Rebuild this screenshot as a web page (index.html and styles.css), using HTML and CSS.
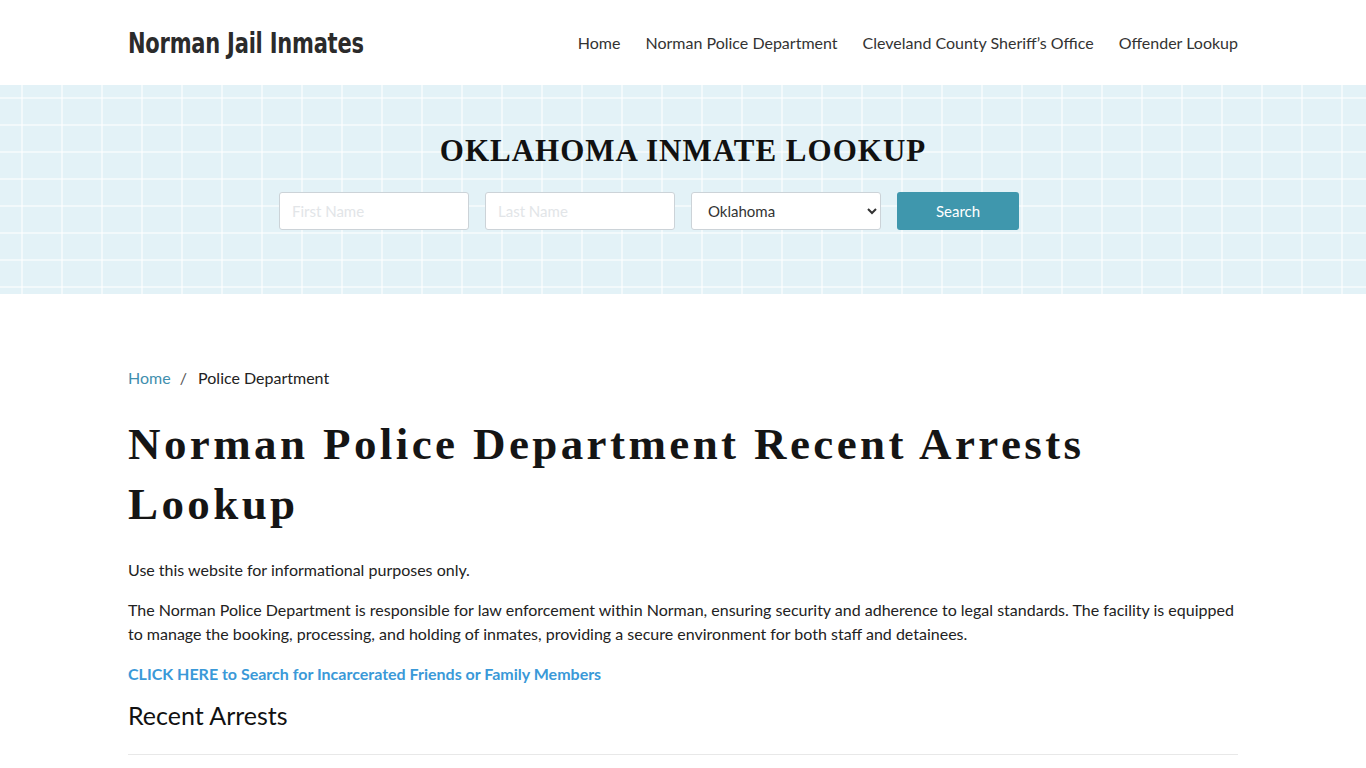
FILE: index.html
```html
<!DOCTYPE html>
<html lang="en">
<head>
    <meta charset="UTF-8">
    <meta name="viewport" content="width=device-width, initial-scale=1.0">
    <title>Norman Police Department Recent Arrests Lookup</title>
    <link rel="stylesheet" href="styles.css">
</head>
<body>
    <header class="site-header">
        <div class="container header-row">
            <a class="logo" href="#">Norman Jail Inmates</a>
            <nav class="main-nav">
                <a href="#">Home</a>
                <a href="#">Norman Police Department</a>
                <a href="#">Cleveland County Sheriff’s Office</a>
                <a href="#">Offender Lookup</a>
            </nav>
        </div>
    </header>

    <section class="search-banner">
        <h2>Oklahoma Inmate Lookup</h2>
        <form class="search-form" onsubmit="return false;">
            <input type="text" placeholder="First Name">
            <input type="text" placeholder="Last Name">
            <select>
                <option>Oklahoma</option>
            </select>
            <button type="submit">Search</button>
        </form>
    </section>

    <main class="container content">
        <div class="breadcrumb">
            <a href="#">Home</a>
            <span class="sep">/</span>
            <span>Police Department</span>
        </div>

        <h1>Norman Police Department Recent Arrests Lookup</h1>

        <p>Use this website for informational purposes only.</p>
        <p>The Norman Police Department is responsible for law enforcement within Norman, ensuring security and adherence to legal standards. The facility is equipped to manage the booking, processing, and holding of inmates, providing a secure environment for both staff and detainees.</p>
        <p><a class="cta" href="#">CLICK HERE to Search for Incarcerated Friends or Family Members</a></p>

        <h3>Recent Arrests</h3>
        <hr>
    </main>
</body>
</html>
```

FILE: styles.css
```css
body {
    margin: 0;
    font-family: Lato, "Open Sans", sans-serif;
    font-size: 16px;
    color: #222;
    background: #fff;
}

a {
    text-decoration: none;
}

.container {
    width: 1110px;
    margin: 0 auto;
}

/* header */
.site-header {
    height: 85px;
}

.header-row {
    display: flex;
    justify-content: space-between;
    align-items: center;
    height: 85px;
}

/* no condensed face installed, so squeeze the bold sans */
.logo {
    display: inline-block;
    font-family: "DejaVu Sans", sans-serif;
    font-weight: bold;
    font-size: 28px;
    letter-spacing: -0.3px;
    color: #2b2b2b;
    margin-top: 2px;
    transform: scaleX(0.75);
    transform-origin: left center;
    width: 234px;
    white-space: nowrap;
}

.main-nav {
    display: flex;
    gap: 25px;
}

.main-nav a {
    color: #333;
    font-size: 16px;
}

/* search banner */
.search-banner {
    height: 209px;
    box-sizing: border-box;
    padding-top: 48px;
    background-color: #e3f2f7;
    background-image:
        repeating-linear-gradient(90deg, transparent 0 21px, rgba(255, 255, 255, 0.55) 21px 23px, transparent 23px 40px),
        repeating-linear-gradient(180deg, transparent 0 12px, rgba(255, 255, 255, 0.55) 12px 14px, transparent 14px 27px);
    text-align: center;
}

.search-banner h2 {
    margin: 0 0 23px;
    font-family: "Liberation Serif", serif;
    font-weight: bold;
    font-size: 31px;
    letter-spacing: 1px;
    text-transform: uppercase;
    color: #111;
    line-height: 36px;
}

.search-form {
    display: flex;
    justify-content: center;
    gap: 16px;
    padding-right: 68px;
}

.search-form input,
.search-form select {
    width: 190px;
    height: 38px;
    box-sizing: border-box;
    border: 1px solid #ccd3d8;
    border-radius: 3px;
    background: #fff;
    font-family: Lato, sans-serif;
    font-size: 15px;
    padding: 0 12px;
    color: #333;
}

.search-form input::placeholder {
    color: #e2e5e8;
}

.search-form button {
    width: 122px;
    height: 38px;
    border: none;
    border-radius: 3px;
    background: #3f97ad;
    color: #fff;
    font-family: Lato, sans-serif;
    font-size: 15px;
}

/* page content */
.content {
    padding-top: 72px;
}

.breadcrumb {
    font-size: 16px;
    color: #222;
    line-height: 24px;
}

.breadcrumb a {
    color: #3f8fae;
}

.breadcrumb .sep {
    margin: 0 7px 0 5px;
    color: #555;
}

h1 {
    font-family: "Liberation Serif", serif;
    font-weight: bold;
    font-size: 45px;
    letter-spacing: 3.4px;
    line-height: 60px;
    color: #151515;
    margin: 24px 0 24px;
}

p {
    margin: 0 0 16px;
    line-height: 24px;
}

.cta {
    color: #3a99d8;
    font-weight: bold;
}

h3 {
    font-size: 25px;
    line-height: 26px;
    font-weight: normal;
    color: #111;
    margin: 16px 0 26px;
}

hr {
    border: none;
    border-top: 1px solid #e8e8e8;
    margin: 0;
}
```
